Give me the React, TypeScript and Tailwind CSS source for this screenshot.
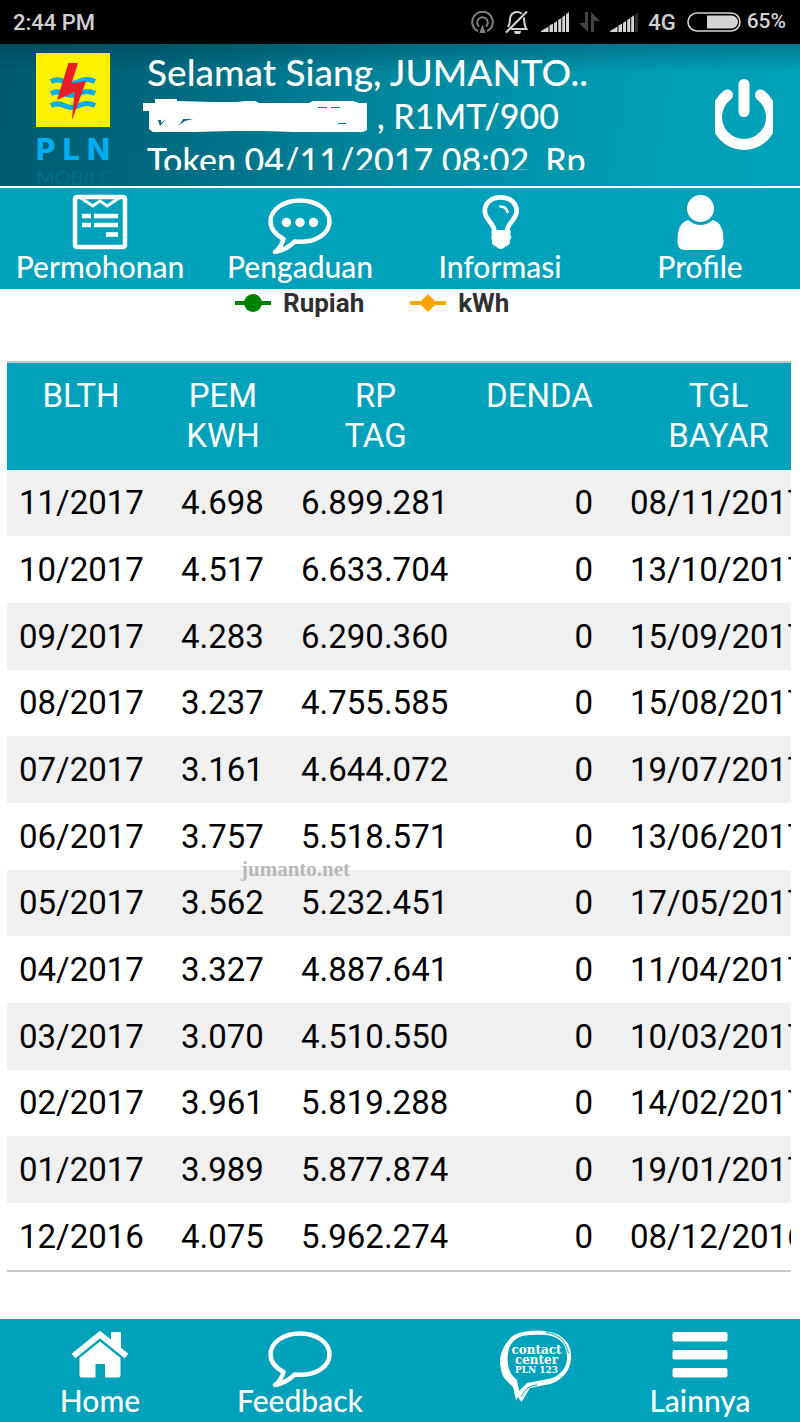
import type { ReactNode } from "react";

const rows = [
  ["11/2017", "4.698", "6.899.281", "0", "08/11/2017"],
  ["10/2017", "4.517", "6.633.704", "0", "13/10/2017"],
  ["09/2017", "4.283", "6.290.360", "0", "15/09/2017"],
  ["08/2017", "3.237", "4.755.585", "0", "15/08/2017"],
  ["07/2017", "3.161", "4.644.072", "0", "19/07/2017"],
  ["06/2017", "3.757", "5.518.571", "0", "13/06/2017"],
  ["05/2017", "3.562", "5.232.451", "0", "17/05/2017"],
  ["04/2017", "3.327", "4.887.641", "0", "11/04/2017"],
  ["03/2017", "3.070", "4.510.550", "0", "10/03/2017"],
  ["02/2017", "3.961", "5.819.288", "0", "14/02/2017"],
  ["01/2017", "3.989", "5.877.874", "0", "19/01/2017"],
  ["12/2016", "4.075", "5.962.274", "0", "08/12/2016"],
];

function SignalIcon({ weakLast }: { weakLast?: boolean }) {
  return (
    <svg width="28" height="20" viewBox="0 0 28 20" fill="#d4d4d4" aria-hidden="true">
      <path d="M0 20v-1l7.500-4.500V20zM8.500 20v-6.500l3.500-2V20zM13 20v-9l3-2v11zM17.200 20V8l3-2v14zM21.200 20V5.300l2.800-2V20z" />
      <path d="M25 20V2.500L28 0v20z" fill={weakLast ? "#2e2e2e" : "#d4d4d4"} />
    </svg>
  );
}

function StatusBar() {
  return (
    <div className="flex h-11 items-center bg-black pr-[14px] pl-[13px] font-[Roboto,sans-serif] text-[21px] font-medium text-[#d0d0d0]">
      <span className="grow text-[22px]">2:44 PM</span>
      <svg className="mr-[11px]" width="23" height="22" viewBox="0 0 23 22" fill="none" stroke="#808080" strokeWidth="2" aria-hidden="true">
        <path d="M7 20.2a10.3 10.3 0 1 1 9 0" />
        <path d="M8 15.5a5.3 5.3 0 1 1 7 0" />
        <path d="M11.5 13.5 8.3 22h6.4z" fill="#808080" stroke="none" />
      </svg>
      <svg className="mr-[13px]" width="23" height="24" viewBox="0 0 23 24" fill="none" stroke="#d4d4d4" strokeWidth="2" aria-hidden="true">
        <path d="M3 17c1.500-2 2-4 2-7.500C5 5 8 2 12 2c2 0 3.500.6 4.700 1.700" />
        <path d="M19 7.500c.3 5 .2 8 2.500 11.500H6" />
        <path d="M1 22.500 22 1.500" />
        <path d="M9 21h7a3.500 3.500 0 0 1-7 0z" fill="#d4d4d4" stroke="none" />
      </svg>
      <SignalIcon />
      <svg className="mx-[10px]" width="21" height="20" viewBox="0 0 21 20" fill="#454545" aria-hidden="true">
        <path d="M6 0h3v20L0 11h6zM12 20h3V9h6L12 0z" />
      </svg>
      <SignalIcon weakLast />
      <span className="mr-[11px] ml-[10px] text-[22px]">4G</span>
      <svg className="mr-[6px]" width="54" height="20" viewBox="0 0 54 20" aria-hidden="true">
        <rect x="1" y="1" width="52" height="18" rx="9" fill="none" stroke="#d4d4d4" strokeWidth="1.600" />
        <path d="M20 3.500h24.500a6.500 6.500 0 0 1 0 13H20z" fill="#d4d4d4" />
      </svg>
      <span>65%</span>
    </div>
  );
}

function Logo() {
  return (
    <div className="mt-[3px] w-[74px] shrink-0">
      <svg className="block" width="74" height="74" viewBox="0 0 74 74" aria-hidden="true">
        <rect width="74" height="74" fill="#fff200" />
        <g fill="none" stroke="#00adef" strokeWidth="5">
          <path d="M15 28.500c5-2.500 9-2 13 0s10 2.500 15 0 11-2.500 16 0" />
          <path d="M15 40.500c5-2.500 9-2 13 0s10 2.500 15 0 11-2.500 16 0" />
          <path d="M15 52.500c5-2.500 9-2 13 0s10 2.500 15 0 11-2.500 16 0" />
        </g>
        <path d="M32.500 10H42l-6.500 20.500L50 28 36.500 66l-.5-.5 2.500-26.500-17.500 8z" fill="#ed1c24" />
      </svg>
      <div className="mt-2 flex h-7 items-center justify-between font-[Inter,sans-serif] text-[30px] leading-7 font-extrabold text-[#00adef]">
        <span>P</span>
        <span>L</span>
        <span>N</span>
      </div>
      <div className="mt-1 font-[Lato,sans-serif] text-[20px] leading-5 text-[#006f86]">MOBILE</div>
    </div>
  );
}

function Header() {
  return (
    <header className="flex h-[144px] items-start border-b-2 border-white bg-[linear-gradient(to_bottom,rgba(0,50,65,0.35),transparent_20%),linear-gradient(100deg,#005a70_0%,#00647a_16%,#00889e_50%,#009db6_80%,#00a2bb_100%)] pt-[6px] pl-9">
      <Logo />
      <div className="ml-[33px] h-[120px] grow overflow-hidden pl-1 font-[Lato,sans-serif] text-[34px] leading-[44px] font-medium whitespace-nowrap text-white">
        <p className="text-[37px]">Selamat Siang, JUMANTO..</p>
        <p className="flex items-center gap-2">
          <svg className="-ml-1 block" width="226" height="34" viewBox="0 0 226 34" fill="#fff" aria-hidden="true">
            <path
              fillRule="evenodd"
              d="M0 4h12V0h22v2l35 1h25l8-1h10l4 2h50l4-2h40l6 2h8v27l-4 2h-70l-30-1H90l-38 1H10l-4-3V12H0zM15 21h3v3l5-4-6 7zM40 20h10l-8 2-6 4 3-4zM175 8h9v1h-9zM188 8h9v1h-9zM195 24h8v1h-8z"
            />
          </svg>
          <span>, R1MT/900</span>
        </p>
        <p className="flex gap-4">
          <span>Token 04/11/2017 08:02</span>
          <span>Rp</span>
        </p>
      </div>
      <button type="button" aria-label="Keluar" className="mt-[27px] mr-[27px]">
        <svg className="block" width="58" height="74" viewBox="0 0 58 74" fill="none" stroke="#fff" strokeWidth="11" strokeLinecap="round" aria-hidden="true">
          <path d="M29 7.500v27" />
          <path d="M12.500 18a27.500 27.500 0 1 0 33 0" />
        </svg>
      </button>
    </header>
  );
}

function NavItem({ label, children }: { label: string; children: ReactNode }) {
  return (
    <a href="#" className="flex flex-1 flex-col items-center">
      <svg className="block" width="64" height="64" viewBox="0 0 64 64" fill="none" aria-hidden="true">
        {children}
      </svg>
      <span className="text-[30px] leading-6 font-medium">{label}</span>
    </a>
  );
}

const bubble = "M32 9.500C15.500 9.500 2.500 18.500 2.500 30.500c0 7.500 5 13 13 17.500-1.500 5.500-3 9-8.500 13 8-1.500 14.500-5 19.500-10.500 22 2 35-8.500 35-20 0-12-13-21-29.500-21z";

function TopNav() {
  return (
    <nav className="flex h-[101px] bg-[#00a2bb] pt-[2px] font-[Lato,sans-serif] text-white">
      <NavItem label="Permohonan">
        <rect x="7" y="7" width="50" height="50" rx="2" stroke="#fff" strokeWidth="4.500" />
        <path d="M13 8l11.700 8 7.300-5 7.300 5L51 8" stroke="#fff" strokeWidth="3" />
        <path d="M14 26h9M26 26h24M14 35h9M26 35h24M38 44.500h12" stroke="#fff" strokeWidth="4.500" />
      </NavItem>
      <NavItem label="Pengaduan">
        <path d={bubble} transform="translate(0 1)" stroke="#fff" strokeWidth="4.500" strokeLinejoin="round" />
        <g fill="#fff">
          <circle cx="18.500" cy="32.500" r="4.700" />
          <circle cx="32" cy="32.500" r="4.700" />
          <circle cx="45.500" cy="32.500" r="4.700" />
        </g>
      </NavItem>
      <NavItem label="Informasi">
        <path d="M26.500 42c0-9-9.700-12-9.700-21C16.800 13 23.500 7.300 32.700 7.300S48.600 13 48.600 21c0 9-9.700 12-9.700 21" stroke="#fff" strokeWidth="4.700" />
        <path d="M23.500 40h18.500q1 1 .5 3t.5 3-.5 3-.5 3q0 3-4 4-5.300 6.500-10.500 0-3.500-1-3.500-4 0-2-.5-3t0-3 0-3 .5-3z" fill="#fff" />
        <path d="M32.500 16.500c4 0 6 2 7 5.500" stroke="#fff" strokeWidth="2.500" strokeLinecap="round" />
      </NavItem>
      <NavItem label="Profile">
        <circle cx="32.500" cy="18.500" r="13.500" fill="#fff" />
        <path d="M20.500 30C24 33.500 28 35 32.500 35S41 33.500 44.500 30c8 2 11 9 11 21 0 6-2.500 9-7 9h-32c-4.500 0-7-3-7-9 0-12 3-19 11-21z" fill="#fff" />
      </NavItem>
    </nav>
  );
}

function Legend() {
  return (
    <div className="flex h-7 items-center pl-[235px] font-[Roboto,sans-serif] text-[26px] leading-7 font-bold text-[#2f2f2f]">
      <svg width="36" height="20" viewBox="0 0 36 20" fill="#008000" aria-hidden="true">
        <path d="M0 8h36v4H0z" />
        <circle cx="18" cy="10" r="9" />
      </svg>
      <span className="ml-3">Rupiah</span>
      <svg className="ml-[46px]" width="36" height="20" viewBox="0 0 36 20" fill="#ffa500" aria-hidden="true">
        <path d="M0 8h36v4H0zM18 1l9 9-9 9-9-9z" />
      </svg>
      <span className="ml-3">kWh</span>
    </div>
  );
}

function BillingTable() {
  return (
    <div className="relative mt-11 mr-[9px] ml-[7px] overflow-hidden border-y-2 border-[#c8c8c8] font-[Roboto,sans-serif] text-[33px] leading-10 text-black">
      <table className="w-[819px] table-fixed border-collapse">
        <colgroup>
          <col className="w-[156px]" />
          <col className="w-[120px]" />
          <col className="w-[185px]" />
          <col className="w-[143px]" />
          <col className="w-[215px]" />
        </colgroup>
        <thead>
          <tr className="h-[107px] bg-[#00a2bb] align-top text-white [&>th]:pt-[13px] [&>th]:font-normal">
            <th scope="col" className="pr-2">BLTH</th>
            <th scope="col">PEM<br />KWH</th>
            <th scope="col">RP<br />TAG</th>
            <th scope="col">DENDA</th>
            <th scope="col">TGL<br />BAYAR</th>
          </tr>
        </thead>
        <tbody>
          {rows.map((row) => (
            <tr key={row[0]} className="h-[67px] odd:bg-[#f0f0f0] [&:nth-child(3n+1)]:h-[66px]">
              <td className="pl-3">{row[0]}</td>
              <td className="pl-[18px]">{row[1]}</td>
              <td className="pl-[18px]">{row[2]}</td>
              <td className="pr-[18px] text-right">{row[3]}</td>
              <td className="pl-[19px]">{row[4]}</td>
            </tr>
          ))}
        </tbody>
      </table>
      <span className="absolute top-[494px] left-[234px] font-['Liberation_Serif',serif] text-[21px] leading-6 font-bold text-[#b8b8b8]">
        jumanto.net
      </span>
    </div>
  );
}

function BottomNav() {
  return (
    <nav className="flex h-[103px] bg-[#00a2bb] pt-[5px] font-[Lato,sans-serif] text-white">
      <NavItem label="Home">
        <path d="M5.500 32 32 10.500 58.500 32" stroke="#fff" strokeWidth="6" />
        <path d="M43 9q0-1 1-1h8q1 0 1 1v18L43 19z" fill="#fff" />
        <path d="M32 17.500 52.500 34v17.500q0 2-2 2H37V40h-9.500v13.500H13.500q-2 0-2-2V34z" fill="#fff" />
      </NavItem>
      <NavItem label="Feedback">
        <path d={bubble} stroke="#fff" strokeWidth="4.500" strokeLinejoin="round" />
      </NavItem>
      <a href="#" className="flex-1">
        <svg className="mt-[6px] ml-[50%] block" width="72" height="72" viewBox="0 0 72 72" fill="none" aria-hidden="true">
          <path
            d="M30 1C18 2 12 5 8 11 2 18 0 26 0 33c1 8 2 12 5 16l8 8 3 13 2-3 3.500 5L30 58l15-3c8-1 13-4 17-8 6-5 9-12 9-20 0-8-2-13-6-17C60 5 56 3 50 2 42 .5 36 .5 30 1zm3 4c8-.5 17 0 21 2 9 3 13 11 13 20 0 7-2 12-7 16-4 4-9 6-17 7l-16 3-8 8-2-11c-4-3-7-7-8-11C8 35 7 29 8 23c1-6 3-10 7-13 4-4 10-5 18-5z"
            fill="#fff"
            fillRule="evenodd"
          />
          <path d="M46 2.500c13 1.500 20 9 22.500 21M21 67c5-9 8-11 16-12" stroke="#00a2bb" strokeWidth="1" />
          <text fill="#fff" fontFamily="'DejaVu Serif', serif" fontWeight="700" textAnchor="middle" fontSize="12">
            <tspan x="36.500" y="23.500">contact</tspan>
            <tspan x="36.500" y="33.500">center</tspan>
            <tspan x="36.500" y="43" fontSize="9">PLN 123</tspan>
          </text>
        </svg>
      </a>
      <NavItem label="Lainnya">
        <g fill="#fff">
          <rect x="4.500" y="8" width="55" height="9.500" rx="2" />
          <rect x="4.500" y="26" width="55" height="9.500" rx="2" />
          <rect x="4.500" y="44" width="55" height="9.500" rx="2" />
        </g>
      </NavItem>
    </nav>
  );
}

export default function App() {
  return (
    <div className="flex min-h-screen flex-col overflow-hidden bg-white">
      <StatusBar />
      <Header />
      <TopNav />
      <main className="grow">
        <Legend />
        <BillingTable />
      </main>
      <BottomNav />
    </div>
  );
}
